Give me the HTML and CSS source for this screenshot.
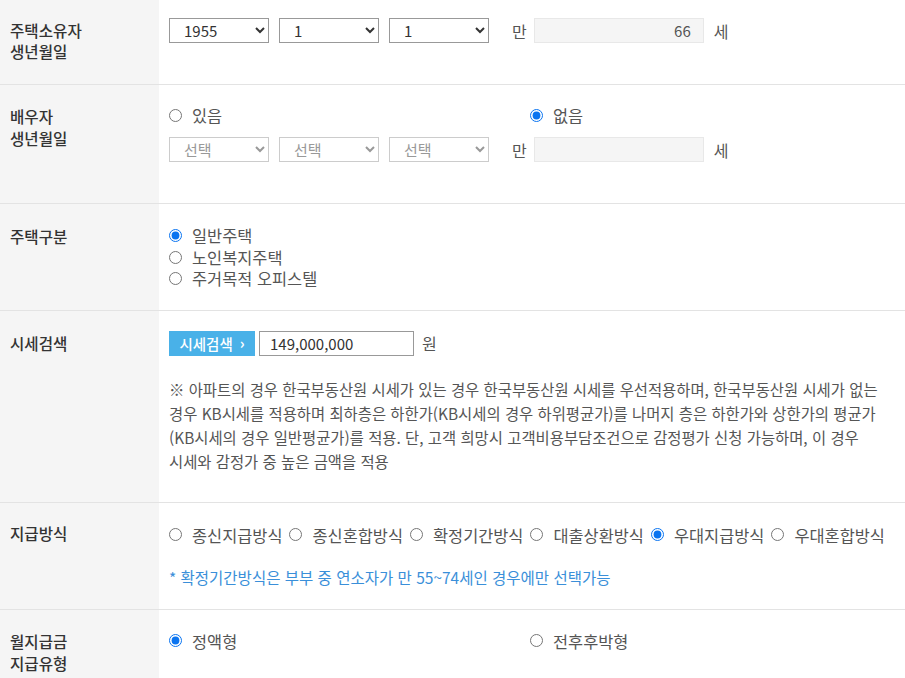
FILE: index.html
```html
<!DOCTYPE html>
<html lang="ko">
<head>
<meta charset="utf-8">
<title>주택연금 조건</title>
<link rel="stylesheet" href="styles.css">
</head>
<body>
<div class="form">
  <div class="row row-birth">
    <div class="label">주택소유자<br>생년월일</div>
    <div class="field">
      <div class="line-controls">
        <select class="sel"><option>1955</option></select>
        <select class="sel"><option>1</option></select>
        <select class="sel"><option>1</option></select>
        <span class="unit-pre">만</span>
        <input class="age" type="text" value="66" readonly>
        <span class="unit">세</span>
      </div>
    </div>
  </div>

  <div class="row row-spouse">
    <div class="label label-wide">배우자<br>생년월일</div>
    <div class="field">
      <div class="two-col">
        <label class="radio"><input type="radio" name="sp"> 있음</label>
        <label class="radio"><input type="radio" name="sp" checked> 없음</label>
      </div>
      <div class="line-controls spouse-controls">
        <select class="sel sel-off"><option>선택</option></select>
        <select class="sel sel-off"><option>선택</option></select>
        <select class="sel sel-off"><option>선택</option></select>
        <span class="unit-pre">만</span>
        <input class="age" type="text" value="" readonly>
        <span class="unit">세</span>
      </div>
    </div>
  </div>

  <div class="row row-type">
    <div class="label">주택구분</div>
    <div class="field stack">
      <label class="radio"><input type="radio" name="ht" checked> 일반주택</label>
      <label class="radio"><input type="radio" name="ht"> 노인복지주택</label>
      <label class="radio"><input type="radio" name="ht"> 주거목적 오피스텔</label>
    </div>
  </div>

  <div class="row row-price">
    <div class="label">시세검색</div>
    <div class="field">
      <div class="line-controls">
        <button class="btn-search" type="button">시세검색 <span class="chev">›</span></button>
        <input class="price" type="text" value="149,000,000">
        <span class="unit">원</span>
      </div>
      <p class="desc">※ 아파트의 경우 한국부동산원 시세가 있는 경우 한국부동산원 시세를 우선적용하며, 한국부동산원 시세가 없는 경우 KB시세를 적용하며 최하층은 하한가(KB시세의 경우 하위평균가)를 나머지 층은 하한가와 상한가의 평균가 (KB시세의 경우 일반평균가)를 적용. 단, 고객 희망시 고객비용부담조건으로 감정평가 신청 가능하며, 이 경우 시세와 감정가 중 높은 금액을 적용</p>
    </div>
  </div>

  <div class="row row-pay">
    <div class="label">지급방식</div>
    <div class="field">
      <div class="inline-radios">
        <label class="radio"><input type="radio" name="pm"> 종신지급방식</label>
        <label class="radio"><input type="radio" name="pm"> 종신혼합방식</label>
        <label class="radio"><input type="radio" name="pm"> 확정기간방식</label>
        <label class="radio"><input type="radio" name="pm"> 대출상환방식</label>
        <label class="radio"><input type="radio" name="pm" checked> 우대지급방식</label>
        <label class="radio"><input type="radio" name="pm"> 우대혼합방식</label>
      </div>
      <p class="note">* 확정기간방식은 부부 중 연소자가 만 55~74세인 경우에만 선택가능</p>
    </div>
  </div>

  <div class="row row-monthly">
    <div class="label label-wide">월지급금<br>지급유형</div>
    <div class="field">
      <div class="two-col">
        <label class="radio"><input type="radio" name="mt" checked> 정액형</label>
        <label class="radio"><input type="radio" name="mt"> 전후후박형</label>
      </div>
    </div>
  </div>
</div>
</body>
</html>
```

FILE: styles.css
```css
html, body {
  margin: 0;
  padding: 0;
  background: #ffffff;
}

body {
  font-family: "Noto Sans CJK KR", "Noto Sans", sans-serif;
  font-size: 15px;
  color: #555555;
  width: 905px;
}

.form {
  display: flex;
  flex-direction: column;
}

.row {
  display: grid;
  grid-template-columns: 159px 1fr;
  border-bottom: 1px solid #e3e3e3;
}

.label {
  background: #f5f5f5;
  padding-left: 10px;
  color: #333333;
  font-size: 15.6px;
  font-weight: 500;
  line-height: 21px;
}

.label-wide {
  line-height: 22px;
}

.field {
  padding-left: 10px;
}

.line-controls {
  display: flex;
  align-items: center;
  height: 25px;
}

.sel {
  width: 100px;
  height: 25px;
  margin: 0 10px 0 0;
  padding: 0 8px 0 10px;
  border: 1px solid #999999;
  border-radius: 0;
  background: #ffffff;
  font-family: "Noto Sans CJK KR", "Noto Sans", sans-serif;
  font-size: 15px;
  color: #333333;
}

.sel + .sel + .sel {
  margin-right: 0;
}

.sel-off {
  border-color: #cccccc;
  color: #999999;
}

.unit-pre {
  margin-left: 23px;
  margin-right: 7px;
  font-size: 16px;
  color: #555555;
}

.unit {
  margin-left: 10px;
  font-size: 16px;
  color: #555555;
}

.age {
  box-sizing: border-box;
  width: 170px;
  height: 25px;
  margin: 0;
  padding: 0 12px;
  border: 1px solid #e8e8e8;
  background: #f5f5f5;
  text-align: right;
  font-family: "Noto Sans CJK KR", "Noto Sans", sans-serif;
  font-size: 15px;
  color: #555555;
  outline: none;
}

.radio {
  display: flex;
  align-items: center;
  gap: 10px;
  white-space: nowrap;
  color: #555555;
  font-size: 16.4px;
  line-height: 22px;
}

.radio input {
  width: 13px;
  height: 13px;
  margin: 0;
  accent-color: #0a74f0;
}

.two-col {
  display: grid;
  grid-template-columns: 361px 1fr;
}

/* row 1 */
.row-birth .label {
  padding-top: 20px;
  padding-bottom: 22px;
}
.row-birth .field {
  padding-top: 18px;
  padding-bottom: 41px;
}

/* row 2 */
.row-spouse .label {
  padding-top: 20px;
}
.row-spouse .field {
  padding-top: 19px;
  padding-bottom: 41px;
}
.spouse-controls {
  margin-top: 11px;
}

/* row 3 */
.row-type .label {
  padding-top: 22px;
}
.stack {
  display: flex;
  flex-direction: column;
  padding-top: 21px;
  padding-bottom: 20px;
}
.stack .radio {
  line-height: 21.5px;
}

/* row 4 */
.row-price .label {
  padding-top: 22px;
}
.row-price .field {
  padding-top: 20px;
  padding-bottom: 29px;
}
.btn-search {
  box-sizing: border-box;
  width: 86px;
  height: 25px;
  margin: 0 4px 0 0;
  padding: 0;
  border: none;
  background: #49b1e8;
  color: #ffffff;
  font-family: "Noto Sans CJK KR", "Noto Sans", sans-serif;
  font-size: 14.5px;
  font-weight: 500;
  display: flex;
  align-items: center;
  justify-content: center;
  gap: 7px;
}
.chev {
  font-weight: 700;
  font-size: 15px;
  line-height: 1;
  position: relative;
  top: -1px;
}
.price {
  box-sizing: border-box;
  width: 155px;
  height: 25px;
  margin: 0;
  padding: 0 10px;
  border: 1px solid #999999;
  font-family: "Noto Sans CJK KR", "Noto Sans", sans-serif;
  font-size: 15px;
  color: #333333;
  outline: none;
}
.row-price .unit {
  margin-left: 8px;
}
.desc {
  margin: 21px 10px 0 0;
  font-size: 15.4px;
  line-height: 24px;
  word-break: keep-all;
  color: #555555;
}

/* row 5 */
.row-pay .label {
  padding-top: 20px;
}
.row-pay .field {
  padding-top: 21px;
  padding-bottom: 21px;
}
.inline-radios {
  display: flex;
  gap: 7px;
}
.note {
  margin: 20px 0 0 0;
  color: #3a8fd9;
  font-size: 15.5px;
  line-height: 22px;
}

/* row 6 */
.row-monthly .label {
  padding-top: 20px;
  padding-bottom: 4px;
}
.row-monthly .field {
  padding-top: 20px;
}
```
